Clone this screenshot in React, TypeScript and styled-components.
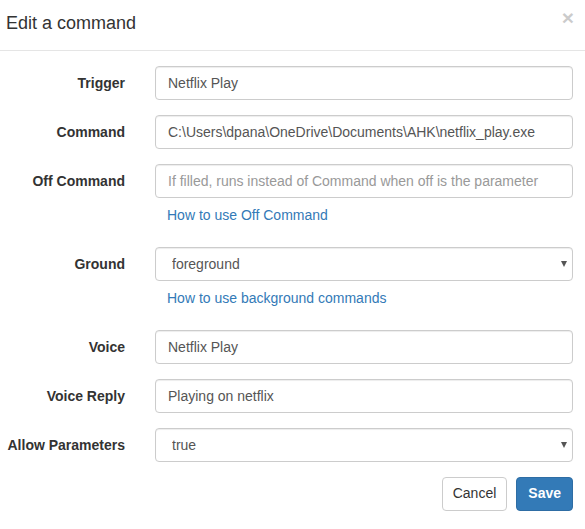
import React from "react"
import styled, { createGlobalStyle } from "styled-components"

const Global = createGlobalStyle`
  html, body {
    margin: 0;
    padding: 0;
    background: #fff;
  }
  body {
    font-family: "Liberation Sans", Arial, sans-serif;
    font-size: 14px;
    line-height: 1.42857;
    color: #333;
  }
  * { box-sizing: border-box; }
`

const Modal = styled.div`
  width: 585px;
  height: 529px;
  overflow: hidden;
  background: #fff;
`

const Header = styled.div`
  display: flex;
  align-items: center;
  justify-content: space-between;
  height: 51px;
  padding: 0 11px 2px 6px;
  border-bottom: 1px solid #e5e5e5;
`

const Title = styled.h4`
  margin: 0;
  font-size: 18px;
  font-weight: 500;
  line-height: 1.42857;
  color: #333;
`

const Close = styled.button`
  align-self: flex-start;
  margin-top: 7px;
  border: 0;
  background: none;
  padding: 0;
  font-family: "Liberation Sans", Arial, sans-serif;
  font-size: 21px;
  font-weight: bold;
  line-height: 1;
  color: #000;
  opacity: 0.2;
  cursor: pointer;
`

const Body = styled.form`
  padding: 15px 12px 15px 0;
  display: flex;
  flex-direction: column;
`

const Group = styled.div`
  display: grid;
  grid-template-columns: 125px 1fr;
  column-gap: 30px;
  margin-bottom: 15px;
`

const Label = styled.label`
  padding-top: 8px;
  text-align: right;
  font-weight: bold;
  color: #333;
`

const Field = styled.div`
  display: flex;
  flex-direction: column;
`

const Input = styled.input`
  display: block;
  width: 100%;
  height: 34px;
  padding: 6px 12px;
  font-family: inherit;
  font-size: 14px;
  color: #555;
  background: #fff;
  border: 1px solid #ccc;
  border-radius: 4px;
  box-shadow: inset 0 1px 1px rgba(0, 0, 0, 0.075);
  outline: none;

  &::placeholder {
    color: #999;
  }
`

const SelectBox = styled.div`
  position: relative;
`

const Select = styled.select`
  display: block;
  width: 100%;
  height: 34px;
  padding: 6px 12px 6px 16px;
  font-family: inherit;
  font-size: 14px;
  color: #555;
  background: #fff;
  border: 1px solid #ccc;
  border-radius: 4px;
  box-shadow: inset 0 1px 1px rgba(0, 0, 0, 0.075);
  appearance: none;
  outline: none;
`

const Caret = styled.span`
  position: absolute;
  right: 6px;
  top: 14px;
  width: 0;
  height: 0;
  border-left: 3px solid transparent;
  border-right: 3px solid transparent;
  border-top: 6px solid #555;
  pointer-events: none;
`

const Help = styled.a`
  display: block;
  margin: 7px 0 7px 12px;
  color: #337ab7;
  text-decoration: none;
  line-height: 20px;
`

const Actions = styled.div`
  display: flex;
  justify-content: flex-end;
  gap: 9px;
`

const Button = styled.button<{ $primary?: boolean }>`
  height: 34px;
  padding: 6px ${({ $primary }) => ($primary ? "11px" : "10px")};
  font-family: inherit;
  font-size: 14px;
  font-weight: ${({ $primary }) => ($primary ? "bold" : "normal")};
  line-height: 1.42857;
  border-radius: 4px;
  border: 1px solid ${({ $primary }) => ($primary ? "#2e6da4" : "#ccc")};
  background: ${({ $primary }) => ($primary ? "#337ab7" : "#fff")};
  color: ${({ $primary }) => ($primary ? "#fff" : "#333")};
  cursor: pointer;
`

type SelectRowProps = { label: string; value: string; options: string[]; help?: string }

const SelectRow: React.FC<SelectRowProps> = ({ label, value, options, help }) => (
  <Group>
    <Label>{label}</Label>
    <Field>
      <SelectBox>
        <Select defaultValue={value}>
          {options.map(o => <option key={o} value={o}>{o}</option>)}
        </Select>
        <Caret />
      </SelectBox>
      {help && <Help href="#">{help}</Help>}
    </Field>
  </Group>
)

type InputRowProps = { label: string; value?: string; placeholder?: string; help?: string }

const InputRow: React.FC<InputRowProps> = ({ label, value, placeholder, help }) => (
  <Group>
    <Label>{label}</Label>
    <Field>
      <Input defaultValue={value} placeholder={placeholder} />
      {help && <Help href="#">{help}</Help>}
    </Field>
  </Group>
)

export default function App() {
  return (
    <>
      <Global />
      <Modal>
        <Header>
          <Title>Edit a command</Title>
          <Close type="button">×</Close>
        </Header>
        <Body onSubmit={e => e.preventDefault()}>
          <InputRow label="Trigger" value="Netflix Play" />
          <InputRow label="Command" value="C:\Users\dpana\OneDrive\Documents\AHK\netflix_play.exe" />
          <InputRow
            label="Off Command"
            placeholder="If filled, runs instead of Command when off is the parameter"
            help="How to use Off Command"
          />
          <SelectRow
            label="Ground"
            value="foreground"
            options={["foreground", "background"]}
            help="How to use background commands"
          />
          <InputRow label="Voice" value="Netflix Play" />
          <InputRow label="Voice Reply" value="Playing on netflix" />
          <SelectRow label="Allow Parameters" value="true" options={["true", "false"]} />
          <Actions>
            <Button type="button">Cancel</Button>
            <Button type="submit" $primary>Save</Button>
          </Actions>
        </Body>
      </Modal>
    </>
  )
}
